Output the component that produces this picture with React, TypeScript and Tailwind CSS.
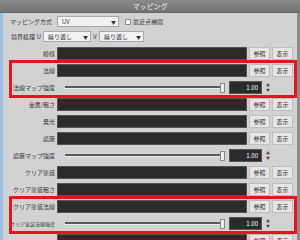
import React from 'react';

const jp = "font-['Noto_Sans_CJK_JP',sans-serif]";

const Label: React.FC<{ text: string; tight?: boolean }> = ({ text, tight }) => (
  <div
    className={`w-[52px] shrink-0 text-right whitespace-nowrap text-[#3a3a3a] leading-none ${
      tight ? 'text-[5px]' : 'text-[6px]'
    }`}
  >
    {text}
  </div>
);

const Btn: React.FC<{ text: string; w: string }> = ({ text, w }) => (
  <div
    className={`${w} h-[13px] shrink-0 flex items-center justify-center bg-[#e6e6e6] border border-[#bdbdbd] text-[6px] text-[#333] leading-none`}
  >
    {text}
  </div>
);

const TexRow: React.FC<{ label: string; tight?: boolean }> = ({ label, tight }) => (
  <div className="flex items-center h-[13px] gap-[2px]">
    <Label text={label} tight={tight} />
    <div className="flex-1 h-[13px] bg-[#2b2b2b] border border-[#555]" />
    <Btn text="参照" w="w-[21px]" />
    <Btn text="表示" w="w-[21px]" />
  </div>
);

const SliderRow: React.FC<{ label: string; tight?: boolean }> = ({ label, tight }) => (
  <div className="flex items-center h-[13px] gap-[2px]">
    <Label text={label} tight={tight} />
    <div className="flex-1 flex items-center pl-[8px] pr-[2px] h-full">
      <div className="flex-1 h-[2px] bg-[#5a5a5a] border-b border-[#eaeaea] box-content" />
      <div className="w-[5px] h-[10px] bg-[#ececec] border border-[#8a8a8a] -ml-[4px]" />
    </div>
    <div className="w-[33px] h-[13px] bg-[#2b2b2b] border border-[#555] flex items-center justify-end pr-[3px] text-[6px] text-white leading-none">
      1.00
    </div>
    <div className="w-[8px] flex flex-col items-center justify-center text-[4px] text-[#444] leading-[5px]">
      <span>▲</span>
      <span>▼</span>
    </div>
    <div className="w-[19px]" />
  </div>
);

const Select: React.FC<{ text: string; w: string }> = ({ text, w }) => (
  <div
    className={`${w} h-[11px] shrink-0 flex items-center justify-between bg-[#f2f2f2] border border-[#a8a8a8] pl-[4px] pr-[2px] text-[6px] text-[#333] leading-none`}
  >
    <span>{text}</span>
    <span className="text-[5px]">▼</span>
  </div>
);

const Highlight: React.FC<{ children: React.ReactNode }> = ({ children }) => (
  <div className="relative flex flex-col gap-[4px]">
    {children}
    <div className="absolute -top-[4px] -bottom-[4px] left-[6px] -right-[4px] border-[3px] border-[#e3161d] pointer-events-none" />
  </div>
);

export default function App() {
  return (
    <div className={`w-[300px] h-[240px] overflow-hidden bg-[#d2d2d2] flex flex-col ${jp}`}>
      <div className="h-[13px] shrink-0 flex items-center justify-center bg-gradient-to-b from-[#8a8a8a] to-[#737373] border-b border-[#666] text-[7px] text-[#f2f2f2] leading-none">
        マッピング
      </div>
      <div className="flex-1 flex">
        <div className="w-[3px] bg-[#9dc0e6]" />
        <div className="flex-1 flex flex-col pr-[4px]">
          <div className="flex items-center h-[11px] mt-[3px] gap-[5px]">
            <div className="w-[49px] text-right text-[6px] text-[#3a3a3a] leading-none whitespace-nowrap">
              マッピング方式
            </div>
            <Select text="UV" w="w-[62px]" />
            <div className="flex items-center gap-[2px] ml-[1px]">
              <div className="w-[6px] h-[6px] bg-white border border-[#888]" />
              <span className="text-[6px] text-[#3a3a3a] leading-none">最近点補間</span>
            </div>
          </div>
          <div className="flex items-center h-[11px] mt-[4px]">
            <div className="w-[32px] text-right text-[6px] text-[#3a3a3a] leading-none whitespace-nowrap">
              境界処理
            </div>
            <span className="w-[8px] text-center text-[6px] text-[#3a3a3a] leading-none">U</span>
            <Select text="繰り返し" w="w-[48px]" />
            <span className="w-[8px] text-center text-[6px] text-[#3a3a3a] leading-none">V</span>
            <Select text="繰り返し" w="w-[45px]" />
          </div>
          <div className="flex flex-col gap-[4px] mt-[5px]">
            <TexRow label="模様" />
            <Highlight>
              <TexRow label="法線" />
              <SliderRow label="法線マップ強度" />
            </Highlight>
            <TexRow label="金属/粗さ" />
            <TexRow label="発光" />
            <TexRow label="遮蔽" />
            <SliderRow label="遮蔽マップ強度" />
            <TexRow label="クリア塗装" />
            <TexRow label="クリア塗装粗さ" />
            <Highlight>
              <TexRow label="クリア塗装法線" />
              <SliderRow label="クリア塗装法線強度" tight />
            </Highlight>
            <TexRow label="" />
          </div>
        </div>
        <div className="w-[3px] bg-[#8c8c8c]" />
      </div>
    </div>
  );
}
